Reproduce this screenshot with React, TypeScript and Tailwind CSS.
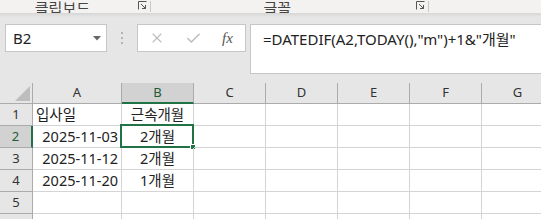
import { X, Check } from "lucide-react";

const cols = ["A", "B", "C", "D", "E", "F", "G"];

const rows: string[][] = [
  ["입사일", "근속개월", "", "", "", "", ""],
  ["2025-11-03", "2개월", "", "", "", "", ""],
  ["2025-11-12", "2개월", "", "", "", "", ""],
  ["2025-11-20", "1개월", "", "", "", "", ""],
  ["", "", "", "", "", "", ""],
  ["", "", "", "", "", "", ""],
];

const font = { fontFamily: '"Noto Sans", "Noto Sans CJK KR", sans-serif' };

const Launcher = () => (
  <svg width="9" height="9" viewBox="0 0 9 9" className="text-[#555]">
    <path d="M0.5 8.5V0.5H8.5" fill="none" stroke="currentColor" strokeWidth="1" />
    <path d="M3 3L7.5 7.5M7.5 4V7.5H4" fill="none" stroke="currentColor" strokeWidth="1" />
  </svg>
);

export default function App() {
  return (
    <div
      className="w-[541px] h-[219px] overflow-hidden bg-[#e6e6e6] flex flex-col text-[#222]"
      style={font}
    >
      {/* ribbon bottom */}
      <div className="h-[13px] bg-[#f3f2f1] overflow-hidden flex items-end text-[15px] leading-none text-[#444] shrink-0">
        <div className="shrink-0 w-[136px] flex justify-end pr-[46px] -mb-[3px]">클립보드</div>
        <div className="shrink-0 mb-[3px] ml-[2px]"><Launcher /></div>
        <div className="shrink-0 w-px h-[11px] bg-[#c8c8c8] ml-[3px] mb-[1px]" />
        <div className="shrink-0 w-[138px] -mb-[3px] ml-[4px] text-right pr-[2px]">글꼴</div>
        <div className="shrink-0 ml-[123px] mb-[3px]"><Launcher /></div>
        <div className="shrink-0 w-px h-[11px] bg-[#c8c8c8] ml-[3px] mb-[1px]" />
      </div>
      <div className="h-[4px] bg-gradient-to-b from-[#d6d6d6] to-[#e6e6e6] shrink-0" />

      {/* formula bar */}
      <div className="flex items-start mt-[7px] h-[49px] shrink-0">
        <div className="shrink-0 ml-[5px] w-[102px] h-[28px] bg-white border border-[#c6c6c6] flex items-center pl-[7px] pr-[5px] text-[15px]">
          <span className="flex-1">B2</span>
          <svg width="8" height="5" viewBox="0 0 8 5">
            <path d="M0 0H8L4 4.5Z" fill="#666" />
          </svg>
        </div>
        <div className="shrink-0 w-[30px] h-[28px] flex flex-col items-center justify-center gap-[3px]">
          <div className="w-[2px] h-[2px] bg-[#b4b4b4]" />
          <div className="w-[2px] h-[2px] bg-[#b4b4b4]" />
          <div className="w-[2px] h-[2px] bg-[#b4b4b4]" />
        </div>
        <div className="shrink-0 w-[109px] h-[28px] bg-white border border-[#c6c6c6] flex items-center">
          <div className="w-[37px] flex justify-center">
            <X size={16} strokeWidth={1.6} color="#bdbdbd" />
          </div>
          <div className="w-[36px] flex justify-center">
            <Check size={17} strokeWidth={2.2} color="#bdbdbd" />
          </div>
          <div
            className="w-[33px] flex justify-center italic text-[15px] text-[#555]"
            style={{ fontFamily: '"Liberation Serif", serif' }}
          >
            fx
          </div>
        </div>
        <div className="shrink-0 ml-[4px] w-[310px] h-[50px] bg-white border border-[#c6c6c6] pl-[12px] pt-[3px] text-[15px] whitespace-nowrap">
          =DATEDIF(A2,TODAY(),"m")+1&amp;"개월"
        </div>
      </div>

      {/* grid */}
      <div className="mt-[10px] grid grid-cols-[33px_89px_72px_72px_72px_72px_72px_72px] w-[554px] bg-white">
        <div className="h-[21px] bg-[#e6e6e6] border-r border-b border-[#ababab] flex items-end justify-end pr-[2px] pb-[2px]">
          <svg width="15" height="15" viewBox="0 0 15 15">
            <path d="M15 0V15H0Z" fill="#bdbdbd" />
          </svg>
        </div>
        {cols.map((c) => (
          <div
            key={c}
            className={
              c === "B"
                ? "h-[21px] bg-[#d2d2d2] border-r border-[#ababab] border-b-2 border-b-[#217346] flex items-center justify-center text-[13px] text-[#1e5b36]"
                : "h-[21px] bg-[#e6e6e6] border-r border-b border-[#ababab] flex items-center justify-center text-[13px] text-[#333]"
            }
          >
            {c}
          </div>
        ))}
        {rows.map((r, i) => (
          <div key={i} className="contents">
            <div
              className={
                i === 1
                  ? "h-[22px] bg-[#d2d2d2] border-b border-[#ababab] border-r-2 border-r-[#217346] flex items-center justify-center text-[13px] text-[#1e5b36]"
                  : "h-[22px] bg-[#e6e6e6] border-b border-r border-[#ababab] flex items-center justify-center text-[13px] text-[#333]"
              }
            >
              {i < 5 ? i + 1 : ""}
            </div>
            {r.map((v, j) => (
              <div
                key={j}
                className={
                  "relative h-[22px] border-r border-b border-[#d4d4d4] flex items-center text-[14.5px] whitespace-nowrap " +
                  (j === 0 && i === 0
                    ? "justify-start pl-[3px]"
                    : j === 0
                    ? "justify-end pr-[3px]"
                    : "justify-center")
                }
              >
                {v}
                {i === 1 && j === 1 && (
                  <div className="absolute -left-[2px] -top-[2px] w-[74px] h-[24px] border-2 border-[#217346]">
                    <div className="absolute -right-[4px] -bottom-[4px] w-[6px] h-[6px] bg-[#217346] border border-white" />
                  </div>
                )}
              </div>
            ))}
          </div>
        ))}
      </div>
    </div>
  );
}
